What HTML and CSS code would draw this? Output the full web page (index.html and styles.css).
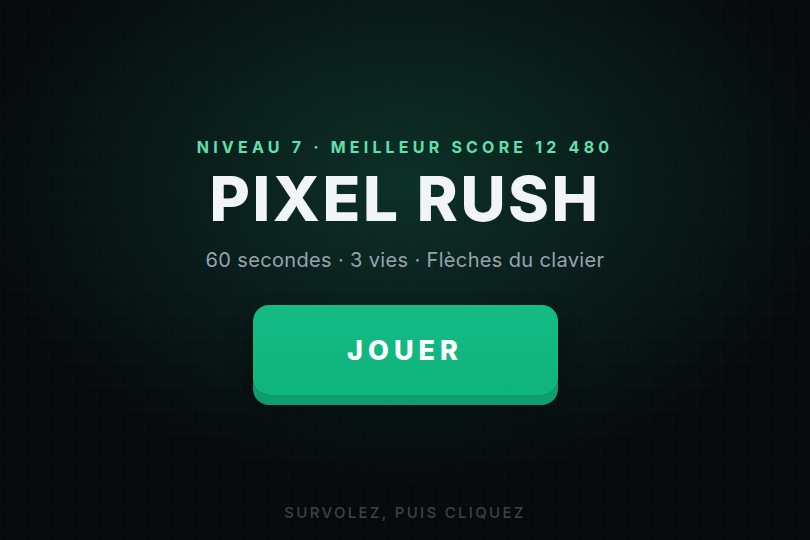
FILE: index.html
```html
<!DOCTYPE html>
<html lang="fr">
<head>
  <meta charset="UTF-8" />
  <meta name="viewport" content="width=device-width, initial-scale=1.0"/>
  <title>Pixel Rush</title>
  <link rel="stylesheet" href="styles.css">
</head>
<body>

<!-- 🎮 Start screen -->
<div class="screen">
  <div class="spacer"></div>

  <div class="hero">
    <p class="eyebrow">Niveau 7 · Meilleur score 12 480</p>
    <h1 class="title">PIXEL RUSH</h1>
    <p class="subtitle">60 secondes · 3 vies · Flèches du clavier</p>
    <button class="play">JOUER</button>
  </div>

  <p class="hint">Survolez, puis cliquez</p>
</div>

</body>
</html>
```

FILE: styles.css
```css
/* 🌌 Background */
html, body {
  height: 100%;
}

body {
  margin: 0;
  font-family: 'Inter', 'Noto Sans', sans-serif;
  color: #f1f5f9;
  background-color: #070a0d;
  background-image:
    radial-gradient(ellipse 430px 300px at 50% 34%, rgba(16, 74, 56, 0.6), rgba(7, 10, 13, 0) 100%),
    linear-gradient(rgba(255, 255, 255, 0.012) 1px, transparent 1px),
    linear-gradient(90deg, rgba(255, 255, 255, 0.012) 1px, transparent 1px);
  background-size: 100% 100%, 24px 24px, 24px 24px;
  overflow: hidden;
}

.screen {
  height: 100vh;
  display: grid;
  grid-template-rows: 1fr auto 1fr;
  justify-items: center;
}

/* 🧾 Hero block */
.hero {
  display: flex;
  flex-direction: column;
  align-items: center;
  text-align: center;
}

.eyebrow {
  margin: 0;
  font-size: 16px;
  font-weight: 700;
  letter-spacing: 4.2px;
  text-transform: uppercase;
  color: #5fe0ac;
  line-height: 18px;
}

.title {
  margin: 7px 0 0;
  font-size: 62px;
  font-weight: 800;
  letter-spacing: 2.6px;
  line-height: 72px;
  color: #f1f5f7;
}

.subtitle {
  margin: 13px 0 0;
  font-size: 20px;
  font-weight: 400;
  letter-spacing: 0.35px;
  color: #97a3ad;
  line-height: 24px;
}

/* 🟩 Play button */
.play {
  margin: 33px 0 7px;
  width: 305px;
  height: 90px;
  border: none;
  border-radius: 16px;
  background: linear-gradient(180deg, #14bb84, #10b47d);
  box-shadow: 0 10px 0 #0d9d6e, 0 14px 24px rgba(0, 0, 0, 0.35);
  font-family: inherit;
  font-size: 27px;
  font-weight: 800;
  letter-spacing: 5px;
  color: #fff;
  cursor: pointer;
}

/* 💬 Footer hint */
.hint {
  align-self: end;
  margin: 0 0 18px;
  font-size: 15px;
  font-weight: 500;
  letter-spacing: 2.3px;
  text-transform: uppercase;
  color: #3b4349;
}
```
